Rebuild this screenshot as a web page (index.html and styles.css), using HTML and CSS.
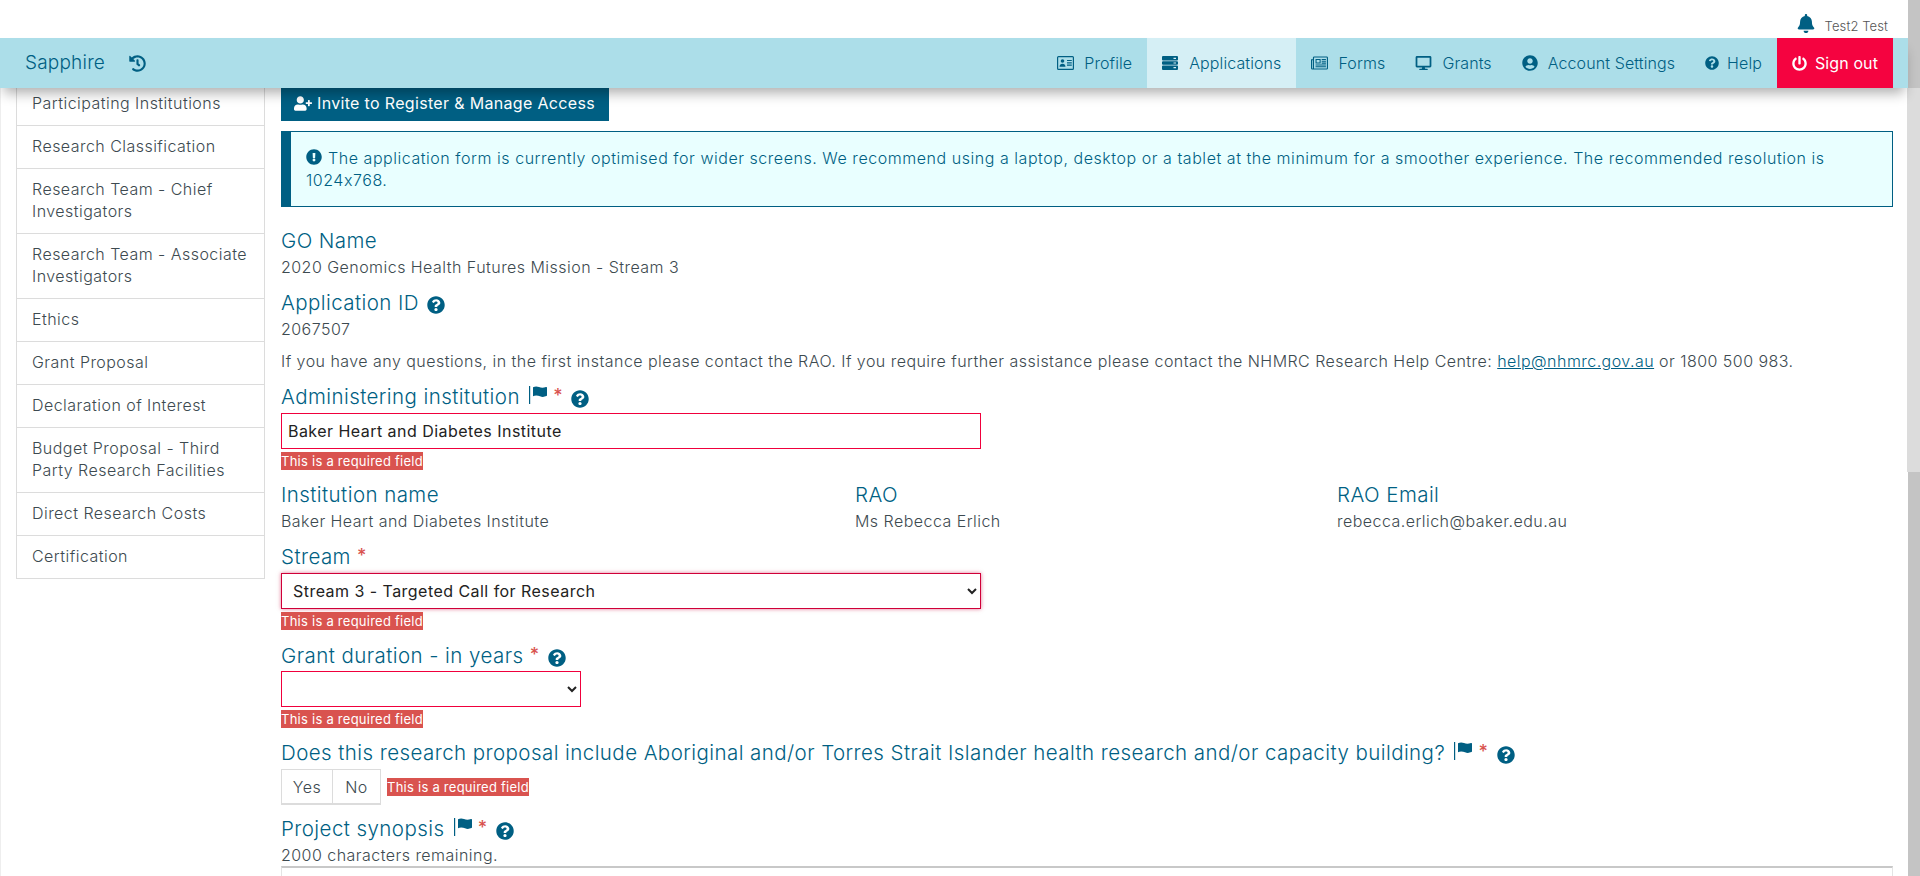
FILE: index.html
```html
<!DOCTYPE html>
<html lang="en">
<head>
<meta charset="utf-8">
<title>Sapphire</title>
<link rel="stylesheet" href="styles.css">
</head>
<body>
<svg class="defs" aria-hidden="true">
  <symbol id="i-q" viewBox="0 0 512 512"><path d="M504 256c0 136.997-111.043 248-248 248S8 392.997 8 256C8 119.083 119.043 8 256 8s248 111.083 248 248zM262.655 90c-54.497 0-89.255 22.957-116.549 63.758-3.536 5.286-2.353 12.415 2.715 16.258l34.699 26.31c5.205 3.947 12.621 3.008 16.665-2.122 17.864-22.658 30.113-35.797 57.303-35.797 20.429 0 45.698 13.148 45.698 32.958 0 14.976-12.363 22.667-32.534 33.976C247.128 238.528 216 254.941 216 296v4c0 6.627 5.373 12 12 12h56c6.627 0 12-5.373 12-12v-1.333c0-28.462 83.186-29.647 83.186-106.667 0-58.002-60.165-102-116.531-102zM256 338c-25.365 0-46 20.635-46 46 0 25.364 20.635 46 46 46s46-20.636 46-46c0-25.365-20.635-46-46-46z"/></symbol>
  <symbol id="i-flag" viewBox="0 0 18 18"><path d="M0 0h1.200v18H0zM4 1.200c2-.9 4-.9 6-.2s4 1 7 0c.5-.2 1 .1 1 .6v7.700c0 .4-.2.600-.5.800-2.500 1-4.500 1-6.500.2S6 9.300 4 10.200z"/></symbol>
</svg>
<div class="page">
  <header class="header">
    <div class="userbar">
      <svg class="bell" viewBox="0 0 448 512"><path d="M224 512c35.320 0 63.970-28.650 63.970-64H160.030c0 35.350 28.650 64 63.970 64zm215.390-149.710c-19.320-20.760-55.470-51.990-55.470-154.290 0-77.700-54.480-139.900-127.940-155.160V32c0-17.670-14.320-32-31.980-32s-31.980 14.330-31.980 32v20.840C118.560 68.100 64.080 130.300 64.080 208c0 102.300-36.150 133.530-55.470 154.290-6 6.450-8.660 14.160-8.610 21.710.11 16.400 12.980 32 32.100 32h383.800c19.120 0 32-15.600 32.100-32 .05-7.550-2.610-15.270-8.610-21.710z"/></svg>
      <span class="username">Test2 Test</span>
    </div>
    <nav class="nav">
      <a class="brand">Sapphire</a>
      <svg class="history" viewBox="0 0 512 512"><path d="M504 255.531c.253 136.640-111.180 248.372-247.820 248.468-59.015.042-113.223-20.530-155.822-54.911-11.077-8.940-11.905-25.541-1.839-35.607l11.267-11.267c8.609-8.609 22.353-9.551 31.891-1.984C173.062 425.135 212.781 440 256 440c101.705 0 184-82.311 184-184 0-101.705-82.311-184-184-184-48.814 0-93.149 18.969-126.068 49.932l50.754 50.754c10.080 10.080 2.941 27.314-11.313 27.314H24c-8.837 0-16-7.163-16-16V38.627c0-14.254 17.234-21.393 27.314-11.314l49.372 49.372C129.209 34.136 189.552 8 256 8c136.810 0 247.747 110.780 248 247.531zm-180.912 78.784l9.823-12.630c8.138-10.463 6.253-25.542-4.210-33.679L288 256.349V152c0-13.255-10.745-24-24-24h-16c-13.255 0-24 10.745-24 24v135.651l65.409 50.874c10.463 8.137 25.541 6.253 33.679-4.210z"/></svg>
      <div class="nav-items">
        <a class="nav-item">
          <svg class="nav-icon" viewBox="0 0 17 14"><path fill-rule="evenodd" d="M1.500 0h14A1.500 1.500 0 0 1 17 1.500v11a1.500 1.500 0 0 1-1.500 1.500h-14A1.500 1.500 0 0 1 0 12.500v-11A1.500 1.500 0 0 1 1.500 0zm0 1.200a.3.300 0 0 0-.3.3v11a.3.300 0 0 0 .3.3h14a.3.300 0 0 0 .3-.3v-11a.3.300 0 0 0-.3-.3z"/><circle cx="5.500" cy="5" r="1.800"/><path d="M2.500 10.800c0-1.800 1.300-3 3-3s3 1.200 3 3zM10 4h4.800v1.100H10zM10 6.300h4.800v1.100H10zM10 8.600h4.800v1.100H10z"/></svg>
          <span>Profile</span></a>
        <a class="nav-item active">
          <svg class="nav-icon nav-icon-server" viewBox="0 0 16 14"><path fill-rule="evenodd" d="M1 0h14a1 1 0 0 1 1 1v2.600a1 1 0 0 1-1 1H1a1 1 0 0 1-1-1V1a1 1 0 0 1 1-1zM11.500 1.700v1.200h2.500V1.700zM1 5.200h14a1 1 0 0 1 1 1v1.600a1 1 0 0 1-1 1H1a1 1 0 0 1-1-1V6.200a1 1 0 0 1 1-1zM11.500 6.400v1.200h2.500V6.400zM1 9.400h14a1 1 0 0 1 1 1V13a1 1 0 0 1-1 1H1a1 1 0 0 1-1-1v-2.600a1 1 0 0 1 1-1zM11.500 11.100v1.200h2.500v-1.200z"/></svg>
          <span>Applications</span></a>
        <a class="nav-item">
          <svg class="nav-icon" viewBox="0 0 18 14"><path fill-rule="evenodd" d="M3.500 0h13A1.500 1.500 0 0 1 18 1.500v11a1.500 1.500 0 0 1-1.500 1.500h-15A1.500 1.500 0 0 1 0 12.500V3h2V1.500A1.500 1.500 0 0 1 3.500 0zm0 1.200a.3.300 0 0 0-.3.3v11l-.1.300h13.400a.3.300 0 0 0 .3-.3v-11a.3.300 0 0 0-.3-.3zM1.200 4.200v8.300a.4.400 0 0 0 .8 0V4.200z"/><path fill-rule="evenodd" d="M4.800 2.800h5.400v4.800H4.800zm1.100 1.100v2.600h3.200V3.900z"/><path d="M11.300 2.800h4.500v1.100h-4.500zM11.300 4.700h4.500v1.100h-4.500zM11.300 6.600h4.500v1.100h-4.500zM4.800 8.600h11v1.100h-11zM4.800 10.400h11v1.100h-11z"/></svg>
          <span>Forms</span></a>
        <a class="nav-item">
          <svg class="nav-icon" viewBox="0 0 576 512"><path d="M528 0H48C21.500 0 0 21.500 0 48v320c0 26.500 21.500 48 48 48h192l-16 48h-72c-13.300 0-24 10.700-24 24s10.700 24 24 24h272c13.300 0 24-10.700 24-24s-10.700-24-24-24h-72l-16-48h192c26.500 0 48-21.500 48-48V48c0-26.500-21.500-48-48-48zm-16 352H64V64h448v288z"/></svg>
          <span>Grants</span></a>
        <a class="nav-item">
          <svg class="nav-icon nav-icon-user" viewBox="0 0 496 512"><path d="M248 8C111 8 0 119 0 256s111 248 248 248 248-111 248-248S385 8 248 8zm0 96c48.600 0 88 39.400 88 88s-39.400 88-88 88-88-39.400-88-88 39.400-88 88-88zm0 344c-58.700 0-111.300-26.600-146.500-68.200 18.800-35.400 55.600-59.800 98.500-59.800 2.400 0 4.800.4 7.100 1.100 13 4.200 26.600 6.900 40.900 6.900 14.300 0 28-2.700 40.900-6.900 2.300-.7 4.700-1.100 7.100-1.100 42.900 0 79.700 24.400 98.500 59.800C359.300 421.400 306.700 448 248 448z"/></svg>
          <span>Account Settings</span></a>
        <a class="nav-item">
          <svg class="nav-icon nav-icon-help"><use href="#i-q"/></svg>
          <span>Help</span></a>
        <a class="nav-item signout">
          <svg class="nav-icon nav-icon-power" viewBox="0 0 512 512"><path d="M400 54.100c63 45 104 118.600 104 201.900 0 136.800-110.800 247.700-247.500 248C120 504.300 8.200 393 8 256.400 7.900 173.100 48.900 99.300 111.800 54.200c11.700-8.300 28-4.800 35 7.700L162.600 90c5.900 10.500 3.100 23.800-6.600 31-41.500 30.800-68 79.600-68 134.900-.1 92.300 74.500 168.100 168 168.100 91.600 0 168.600-74.200 168-169.100-.3-51.800-24.700-101.800-68.100-134-9.700-7.200-12.400-20.500-6.500-30.900l15.800-28.100c7-12.400 23.200-16.100 34.800-7.800zM296 264V24c0-13.300-10.700-24-24-24h-32c-13.300 0-24 10.700-24 24v240c0 13.300 10.700 24 24 24h32c13.300 0 24-10.700 24-24z"/></svg>
          <span>Sign out</span></a>
      </div>
    </nav>
  </header>
  <main class="main">
    <aside class="sidebar">
      <a class="side-item">Participating Institutions</a>
      <a class="side-item">Research Classification</a>
      <a class="side-item">Research Team - Chief Investigators</a>
      <a class="side-item">Research Team - Associate Investigators</a>
      <a class="side-item">Ethics</a>
      <a class="side-item">Grant Proposal</a>
      <a class="side-item">Declaration of Interest</a>
      <a class="side-item">Budget Proposal - Third Party Research Facilities</a>
      <a class="side-item">Direct Research Costs</a>
      <a class="side-item">Certification</a>
    </aside>
    <section class="content">
      <a class="invite">
        <svg class="invite-icon" viewBox="0 0 640 512"><path d="M224 256c70.700 0 128-57.300 128-128S294.700 0 224 0 96 57.300 96 128s57.300 128 128 128zm89.600 32h-16.700c-22.200 10.200-46.900 16-72.900 16s-50.600-5.800-72.900-16h-16.700C60.200 288 0 348.200 0 422.400V464c0 26.500 21.500 48 48 48h352c26.500 0 48-21.500 48-48v-41.600c0-74.200-60.200-134.400-134.400-134.400zM624 208h-64v-64c0-8.800-7.200-16-16-16h-32c-8.800 0-16 7.200-16 16v64h-64c-8.800 0-16 7.200-16 16v32c0 8.800 7.200 16 16 16h64v64c0 8.800 7.200 16 16 16h32c8.800 0 16-7.200 16-16v-64h64c8.800 0 16-7.200 16-16v-32c0-8.800-7.200-16-16-16z"/></svg>
        <span>Invite to Register &amp; Manage Access</span></a>
      <div class="alert">
        <svg class="alert-icon" viewBox="0 0 512 512"><path d="M504 256c0 136.997-111.043 248-248 248S8 392.997 8 256C8 119.083 119.043 8 256 8s248 111.083 248 248zm-248 50c-25.405 0-46 20.595-46 46s20.595 46 46 46 46-20.595 46-46-20.595-46-46-46zm-43.673-165.346l7.418 136c.347 6.364 5.609 11.346 11.982 11.346h48.546c6.373 0 11.635-4.982 11.982-11.346l7.418-136c.375-6.874-5.098-12.654-11.982-12.654h-63.383c-6.884 0-12.356 5.780-11.981 12.654z"/></svg>
        The application form is currently optimised for wider screens. We recommend using a laptop, desktop or a tablet at the minimum for a smoother experience. The recommended resolution is 1024x768.
      </div>

      <h3 class="label first">GO Name</h3>
      <p class="value">2020 Genomics Health Futures Mission - Stream 3</p>

      <h3 class="label gap-13">Application ID <svg class="help"><use href="#i-q"/></svg></h3>
      <p class="value">2067507</p>

      <p class="note">If you have any questions, in the first instance please contact the RAO. If you require further assistance please contact the NHMRC Research Help Centre: <a class="link">help@nhmrc.gov.au</a> or 1800 500 983.</p>

      <h3 class="label gap-13">Administering institution <svg class="flag"><use href="#i-flag"/></svg> <span class="req">*</span> <svg class="help"><use href="#i-q"/></svg></h3>
      <input class="field" type="text" value="Baker Heart and Diabetes Institute">
      <span class="error">This is a required field</span>

      <div class="info-row">
        <div class="info-col col-name">
          <h3 class="label">Institution name</h3>
          <p class="value">Baker Heart and Diabetes Institute</p>
        </div>
        <div class="info-col col-rao">
          <h3 class="label">RAO</h3>
          <p class="value">Ms Rebecca Erlich</p>
        </div>
        <div class="info-col col-email">
          <h3 class="label">RAO Email</h3>
          <p class="value">rebecca.erlich@baker.edu.au</p>
        </div>
      </div>

      <h3 class="label gap-13">Stream <span class="req">*</span></h3>
      <select class="field select focus"><option>Stream 3 - Targeted Call for Research</option></select>
      <span class="error">This is a required field</span>

      <h3 class="label gap-14">Grant duration - in years <span class="req">*</span> <svg class="help"><use href="#i-q"/></svg></h3>
      <select class="field select short"><option></option></select>
      <span class="error">This is a required field</span>

      <h3 class="label gap-13">Does this research proposal include Aboriginal and/or Torres Strait Islander health research and/or capacity building? <svg class="flag"><use href="#i-flag"/></svg> <span class="req">*</span> <svg class="help"><use href="#i-q"/></svg></h3>
      <div class="yesno">
        <span class="btn btn-yes">Yes</span><span class="btn btn-no">No</span>
        <span class="error">This is a required field</span>
      </div>

      <h3 class="label gap-12">Project synopsis <svg class="flag"><use href="#i-flag"/></svg> <span class="req">*</span> <svg class="help"><use href="#i-q"/></svg></h3>
      <p class="value">2000 characters remaining.</p>
      <div class="textarea"></div>
    </section>
  </main>
</div>
<div class="scrollbar"><div class="thumb"></div></div>
</body>
</html>
```
FILE: styles.css
```css
* { box-sizing: border-box; }
html, body { margin: 0; height: 100%; }
body {
  display: flex;
  height: 876px;
  overflow: hidden;
  background: #fff;
  color: #3d4a50;
  font-family: "Inter", "Liberation Sans", sans-serif;
  font-weight: 300;
  font-size: 16px;
  letter-spacing: .46px;
  line-height: 22px;
}
.defs { display: none; }
.page { flex: 1; min-width: 0; display: flex; flex-direction: column; }
.scrollbar { position: relative; width: 12px; background: #c4c4c4; }
.thumb { position: absolute; left: -1px; right: 0; top: 88px; height: 384px; background: #dcdcdc; }

.header { position: relative; z-index: 2; flex: none; background: #fff; }
.userbar { height: 38px; display: flex; justify-content: flex-end; align-items: center; gap: 9px; padding: 14px 20px 0 0; }
.bell { width: 20px; height: 19px; fill: #005f83; margin-top: -5px; }
.username { font-size: 13px; letter-spacing: .1px; color: #555; }

.nav { height: 50px; display: flex; align-items: center; background: #acdee9; color: #005f83; box-shadow: 0 9px 12px -4px rgba(0,0,0,.32); padding-left: 25px; }
.brand { font-size: 19px; font-weight: 300; letter-spacing: .2px; }
.history { width: 17px; height: 17px; fill: #005f83; margin-left: 24px; }
.nav-items { margin-left: auto; display: flex; align-self: stretch; margin-right: 15px; }
.nav-item { display: flex; align-items: center; padding: 0 15px; font-size: 16px; letter-spacing: .1px; }
.nav-item.active { background: #d5eff5; }
.nav-icon { flex: none; width: 17px; height: 14px; fill: #005f83; margin-right: 10px; }
.nav-icon-server { width: 16px; margin-right: 11px; }
.nav-icon-user { width: 16px; height: 16px; }
.nav-icon-help { width: 14px; height: 14px; margin-right: 8px; }
.nav-icon-power { width: 15px; height: 15px; margin-right: 8px; }
.signout { background: #f50340; color: #fff; font-weight: 400; }
.signout .nav-icon { fill: #fff; }

.main { flex: 1; min-height: 0; display: flex; overflow: hidden; padding: 0 15px 0 15px; border-left: 1px solid #eee; }
.sidebar { flex: none; width: 249px; margin-top: -5px; align-self: flex-start; border: 1px solid #dcdcdc; border-top: 0; }
.side-item { display: block; padding: 9px 12px 11px 15px; border-bottom: 1px solid #dcdcdc; }
.side-item:last-child { border-bottom: 0; }

.content { flex: 1; min-width: 0; margin-left: 16px; margin-top: -3px; }
.invite { display: inline-flex; align-items: center; gap: 5px; height: 36px; padding: 0 14px 0 13px; background: #005f83; color: #fff; font-weight: 400; font-size: 16px; letter-spacing: .33px; vertical-align: top; }
.invite-icon { width: 18px; height: 15px; fill: #fff; }
.alert { margin-top: 10px; height: 76px; padding: 15px 15px 0 15px; background: #e9ffff; border: 1px solid #005f83; border-left-width: 10px; color: #005f83; letter-spacing: .54px; }
.alert-icon { width: 16px; height: 16px; fill: #005f83; vertical-align: -1px; margin-right: 1px; }

.label { margin: 0; height: 24px; white-space: nowrap; font-size: 20.5px; line-height: 24px; font-weight: 300; letter-spacing: .43px; color: #005f83; }
.first { margin-top: 22px; }
.gap-12 { margin-top: 12px; }
.gap-13 { margin-top: 13px; }
.gap-14 { margin-top: 14px; }
.value, .note { margin: 0; }
.value { margin-top: 3px; }
.note { margin-top: 10px; }
.help { width: 18px; height: 18px; fill: #005f83; vertical-align: -4px; margin-left: 2px; }
.flag { width: 18px; height: 18px; fill: #005f83; vertical-align: 0; margin-left: 3px; }
.req { color: #d9534f; font-weight: 500; font-size: 18px; position: relative; top: -2px; }
.link { color: #005f83; text-decoration: underline; }

.field { display: block; height: 36px; width: 700px; margin: 4px 0 0; padding: 0 6px; border: 1px solid #f0003c; border-radius: 0; background: #fff; color: #222; font: inherit; font-weight: 400; letter-spacing: inherit; outline: 0; }
.select { padding: 0 7px; }
.focus { border-color: #d00038; box-shadow: 0 0 4px rgba(200,0,60,.55); }
.short { width: 300px; margin-top: 3px; }
.error { display: block; width: max-content; height: 18px; margin-top: 3px; background: #d9534f; color: #fff; font-size: 13px; line-height: 18px; font-weight: 400; letter-spacing: .25px; }

.info-row { display: flex; margin-top: 13px; }
.info-col { flex: none; }
.col-name { width: 574px; }
.col-rao { width: 482px; }
.yesno { display: flex; align-items: center; margin-top: 4px; }
.yesno .error { margin: 0 0 0 6px; }
.btn { height: 36px; border: 1px solid #dcdcdc; border-bottom-width: 2px; display: flex; align-items: center; justify-content: center; }
.btn-yes { width: 52px; }
.btn-no { width: 48px; border-left: 0; }
.textarea { height: 40px; border: 1px solid #e4e4e4; border-top: 2px solid #c8c8c8; }
```
